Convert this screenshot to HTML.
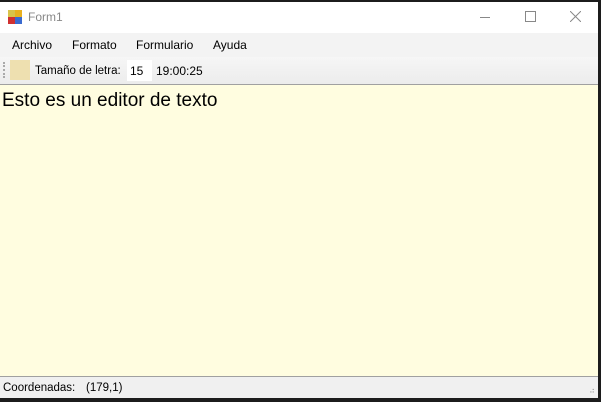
<!DOCTYPE html>
<html><head><style>
body{margin:0;width:601px;height:402px;background:#1c1c1c;position:relative;overflow:hidden;font-family:"Segoe UI","Liberation Sans",sans-serif;font-size:12px;color:#000}
.win{position:absolute;left:0;top:2px;width:598px;height:396px;background:#fff}
.title{position:absolute;top:0;left:0;right:0;height:31px;background:#fff}
.menu{position:absolute;top:31px;left:0;right:0;height:24px;background:#f3f3f3}
.menu span{position:absolute;top:5px}
.tool{position:absolute;top:55px;left:0;right:0;height:27px;background:linear-gradient(#f6f6f6,#ececec);border-bottom:1px solid #a0a0a0}
.tool span{line-height:15px}
.edit{position:absolute;top:83px;left:0;right:0;height:291px;background:#fffde0;border-bottom:1px solid #a0a0a0}
.status{position:absolute;top:375px;left:0;right:0;height:21px;background:#f0f0f0;font-size:11.5px}
.status span{line-height:15px}
</style></head><body>
<div class="win">
<div class="title">
<svg style="position:absolute;left:8px;top:8px" width="14" height="14"><rect x="0" y="0" width="7" height="7" fill="#d9c34a"/><rect x="7" y="0" width="7" height="7" fill="#e8b020"/><rect x="0" y="7" width="7" height="7" fill="#d03030"/><rect x="7" y="7" width="7" height="7" fill="#3a6ad0"/></svg>
<span style="position:absolute;left:28px;top:8px;color:#888">Form1</span>
<div style="position:absolute;left:480px;top:15px;width:10px;height:1px;background:#888"></div>
<div style="position:absolute;left:525px;top:9px;width:9px;height:9px;border:1px solid #888"></div>
<svg style="position:absolute;left:570px;top:9px" width="11" height="11"><path d="M0 0L11 11M11 0L0 11" stroke="#888" stroke-width="1"/></svg>
</div>
<div class="menu"><span style="left:12px">Archivo</span><span style="left:72px">Formato</span><span style="left:136px">Formulario</span><span style="left:213px">Ayuda</span></div>
<div class="tool">
<div style="position:absolute;left:3px;top:5px;width:2px;height:16px;border-left:2px dotted #aaa"></div>
<div style="position:absolute;left:10px;top:3px;width:20px;height:20px;background:#eee0b0"></div>
<span style="position:absolute;left:35px;top:7px;font-size:11.5px">Tamaño de letra:</span>
<div style="position:absolute;left:127px;top:3px;width:25px;height:21px;background:#fff"></div>
<span style="position:absolute;left:130px;top:7px">15</span>
<span style="position:absolute;left:156px;top:7px">19:00:25</span>
</div>
<div class="edit"><span style="position:absolute;left:2px;top:5px;font-family:'Liberation Sans',sans-serif;font-size:19px">Esto es un editor de texto</span></div>
<div class="status"><span style="position:absolute;left:3px;top:4px">Coordenadas:</span><span style="position:absolute;left:86px;top:4px">(179,1)</span>
<span style="position:absolute;right:3px;top:6px;font-size:8px;color:#999">⠴</span></div>
</div>
</body></html>
